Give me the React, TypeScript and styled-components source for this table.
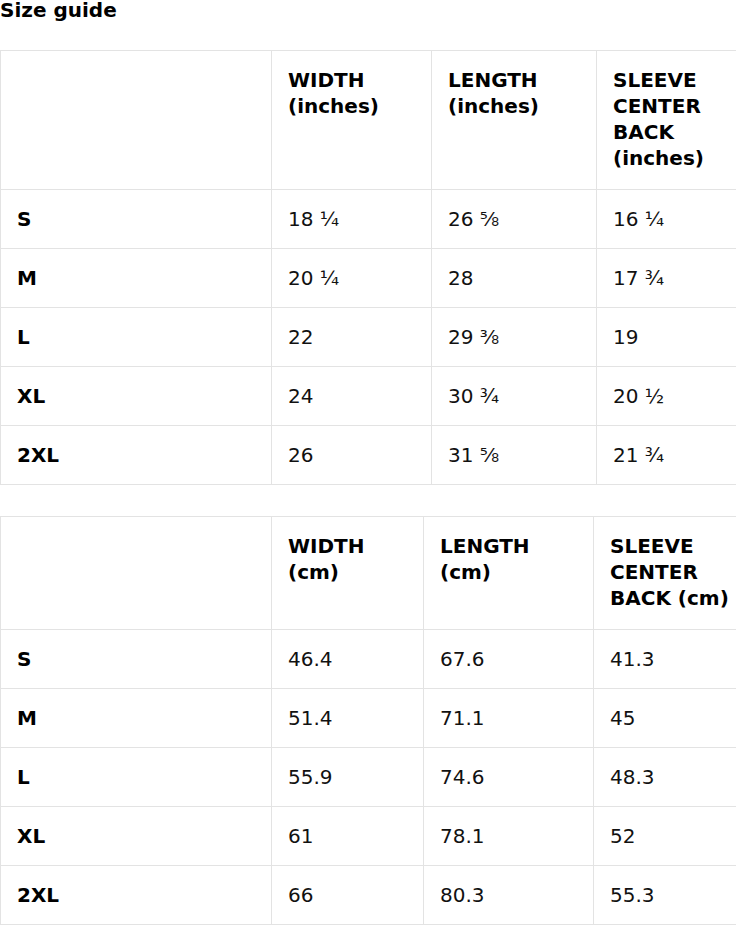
import React from 'react'
import styled, { createGlobalStyle } from 'styled-components'

const GlobalStyle = createGlobalStyle`
html, body {
  margin: 0;
  padding: 0;
  overflow: hidden;
  background: #fff;
}
body {
  font-family: "DejaVu Sans", "Liberation Sans", sans-serif;
  color: #000;
}
`

const Page = styled.div`
  width: 760px;
`

const Title = styled.h2`
  margin: 0 0 30px;
  font-size: 20px;
  line-height: 20px;
  font-weight: bold;
`

const Table = styled.table`
  border-collapse: collapse;
  table-layout: fixed;
  width: 746px;
  margin-bottom: 31px;
  font-size: 20px;
  line-height: 26px;
`

const HeadCell = styled.th`
  border: 1px solid #e3e3e3;
  padding: 16px 16px 18px;
  text-align: left;
  vertical-align: top;
  font-weight: bold;
`

const SizeCell = styled.td`
  border: 1px solid #e3e3e3;
  padding: 16px;
  font-weight: bold;
`

const ValueCell = styled.td`
  border: 1px solid #e3e3e3;
  padding: 16px;
  color: #111;
`

type Guide = {
  widths: number[]
  headers: string[]
  rows: string[][]
}

const inches: Guide = {
  widths: [271, 160, 165, 150],
  headers: ['WIDTH (inches)', 'LENGTH (inches)', 'SLEEVE CENTER BACK (inches)'],
  rows: [
    ['S', '18 ¼', '26 ⅝', '16 ¼'],
    ['M', '20 ¼', '28', '17 ¾'],
    ['L', '22', '29 ⅜', '19'],
    ['XL', '24', '30 ¾', '20 ½'],
    ['2XL', '26', '31 ⅝', '21 ¾'],
  ],
}

const cm: Guide = {
  widths: [271, 152, 170, 153],
  headers: ['WIDTH (cm)', 'LENGTH (cm)', 'SLEEVE CENTER BACK (cm)'],
  rows: [
    ['S', '46.4', '67.6', '41.3'],
    ['M', '51.4', '71.1', '45'],
    ['L', '55.9', '74.6', '48.3'],
    ['XL', '61', '78.1', '52'],
    ['2XL', '66', '80.3', '55.3'],
  ],
}

function SizeTable({ guide }: { guide: Guide }) {
  return (
    <Table>
      <colgroup>
        {guide.widths.map((w, i) => (
          <col key={i} style={{ width: w }} />
        ))}
      </colgroup>
      <thead>
        <tr>
          <HeadCell></HeadCell>
          {guide.headers.map((h) => (
            <HeadCell key={h}>{h}</HeadCell>
          ))}
        </tr>
      </thead>
      <tbody>
        {guide.rows.map((row) => (
          <tr key={row[0]}>
            <SizeCell>{row[0]}</SizeCell>
            {row.slice(1).map((v, i) => (
              <ValueCell key={i}>{v}</ValueCell>
            ))}
          </tr>
        ))}
      </tbody>
    </Table>
  )
}

export default function App() {
  return (
    <>
      <GlobalStyle />
      <Page>
        <Title>Size guide</Title>
        <SizeTable guide={inches} />
        <SizeTable guide={cm} />
      </Page>
    </>
  )
}
